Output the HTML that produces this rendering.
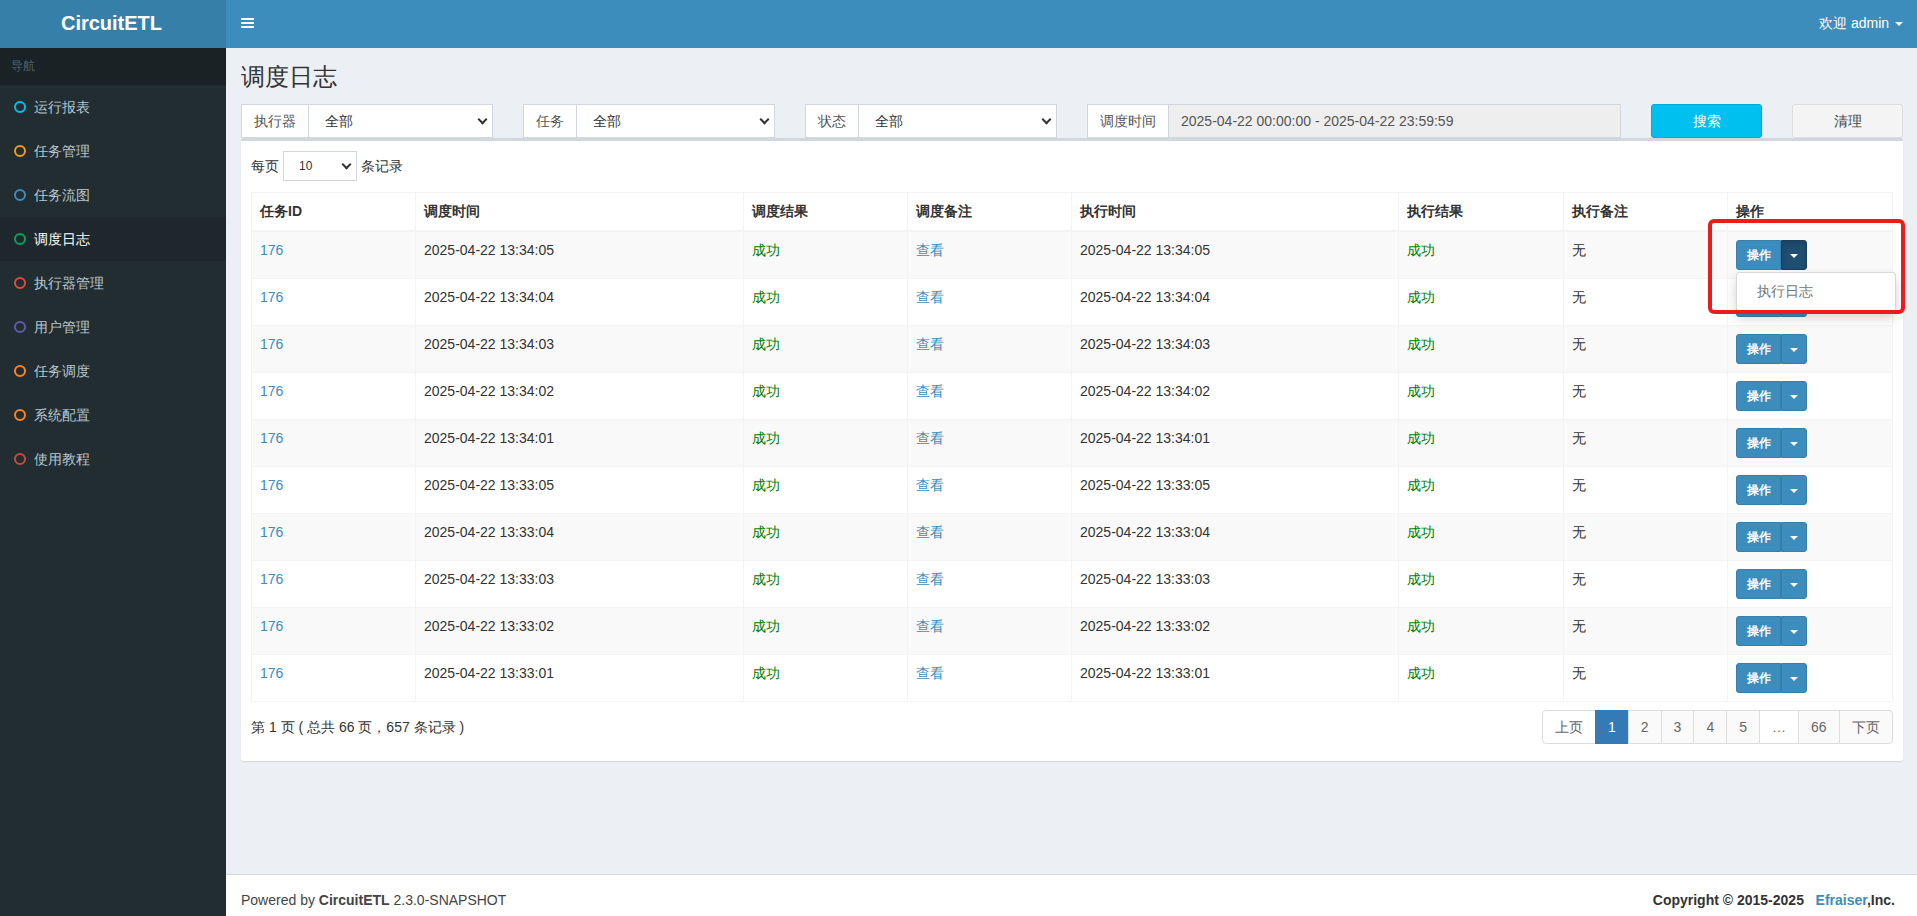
<!DOCTYPE html>
<html><head><meta charset="utf-8">
<style>
*{box-sizing:border-box}
html,body{margin:0;padding:0;width:1917px;height:916px;overflow:hidden;font-family:"Liberation Sans",sans-serif;font-size:14px;color:#333;background:#ecf0f5}
.logo{position:absolute;left:0;top:0;width:226px;height:48px;background:#367fa9;color:#fff;font-size:20px;font-weight:bold;text-align:center;line-height:46px;padding-right:3px}
.navbar{position:absolute;left:226px;top:0;right:0;height:48px;background:#3c8dbc;color:#fff}
.toggle{position:absolute;left:15px;top:18px;width:13px}
.toggle i{display:block;height:2px;background:#fff;margin-bottom:2px}
.user{position:absolute;right:14px;top:15px;font-size:14px;color:#fff}
.caret{display:inline-block;width:0;height:0;border-top:4px solid;border-left:4px solid transparent;border-right:4px solid transparent;vertical-align:middle;margin-left:2px}
.sidebar{position:absolute;left:0;top:48px;width:226px;bottom:0;background:#222d32}
.sidebar .hdr{height:37px;background:#1a2226;color:#4b646f;font-size:12px;padding:10px 0 0 11px}
.menu{position:relative}
.menu div{height:44px;position:relative;color:#b8c7ce;font-size:14px;line-height:44px;padding-left:34px}
.menu div.active{background:#1e282c;color:#fff}
.menu div b{position:absolute;left:14px;top:16px;width:12px;height:12px;border-radius:50%;border:2px solid}
.content{position:absolute;left:226px;top:48px;right:0;bottom:42px}
h1{position:absolute;left:15px;top:13px;margin:0;font-size:24px;font-weight:normal;color:#333}
.footer{position:absolute;left:226px;right:0;bottom:0;height:42px;background:#fff;border-top:1px solid #d2d6de;color:#444;padding:0 15px;line-height:50px}

.filters{position:absolute;left:15px;top:56px;width:1661px;height:34px}
.ig{position:absolute;top:0;height:34px;display:flex;background:#fff;border:1px solid #d2d6de}
.ig .lab{border-right:1px solid #d2d6de;color:#555;padding:0 12px;line-height:32px;white-space:nowrap}
.ig .sel{flex:1;position:relative;color:#333;padding-left:16px;line-height:32px}
.chev{position:absolute;right:6px;top:11px;width:7px;height:7px;border-right:2px solid #333;border-bottom:2px solid #333;transform:rotate(45deg)}
.ig.dt .sel{background:#eee;color:#555;padding-left:12px}
.btn{position:absolute;top:0;height:34px;border-radius:3px;text-align:center;line-height:32px;font-size:14px}
.box{position:absolute;left:15px;top:90px;width:1662px;height:623px;background:#fff;border-top:3px solid #d2d6de;border-radius:3px;box-shadow:0 1px 1px rgba(0,0,0,.1)}
.len{position:absolute;left:10px;top:10px;line-height:30px;color:#333}
.len .s{display:inline-block;vertical-align:top;position:relative;width:74px;height:30px;border:1px solid #d2d6de;margin:0 4px 0 4px;font-size:12px;padding-left:15px;line-height:28px}
.len .s .chev{top:9px;right:6px;width:7px;height:7px}
table{position:absolute;left:10px;top:51px;width:1641px;border-collapse:collapse;table-layout:fixed}
td,th{border:1px solid #f4f4f4;padding:8px;text-align:left;line-height:20px;vertical-align:top}
th{font-weight:bold;border-bottom-width:2px;height:38px;color:#333}
td{height:47px;white-space:nowrap}
tr.odd td{background:#f9f9f9}
a{color:#3c8dbc}
.ok{color:#008000}
.bg{display:block;margin-top:0;height:30px;position:relative;width:71px}
.b1,.b2{position:absolute;top:0;height:30px;background:#3c8dbc;border:1px solid #367fa9;color:#fff;font-size:12px;line-height:28px}
.b1{left:0;width:45px;border-radius:3px 0 0 3px;text-align:center;font-weight:bold}
.b2{left:45px;width:26px;border-radius:0 3px 3px 0}
.b2 .caret{position:absolute;left:8px;top:13px;border-top-width:4px;margin:0}
.b2.act{background:#1f4e71;border-color:#1a3f5e;box-shadow:inset 0 3px 5px rgba(0,0,0,.125)}
.info{position:absolute;left:10px;top:576px;line-height:20px}
.pag{position:absolute;left:1301px;top:569px;height:34px;display:flex}
.pag span{display:block;height:34px;border:1px solid #ddd;margin-left:-1px;padding:0 12px;line-height:32px;color:#666;background:#fafafa}
.footer .r{position:absolute;right:22px;top:0;font-weight:bold;color:#333}
.dd{position:absolute;left:1736px;top:272px;width:160px;height:40px;background:#fff;border:1px solid rgba(0,0,0,.15);border-radius:4px;box-shadow:0 6px 12px rgba(0,0,0,.175);color:#777;padding:8px 0 0 20px;line-height:20px;font-size:14px}
.red{position:absolute;left:1708px;top:219px;width:197px;height:95px;border:4px solid #ec1c1c;border-radius:6px}
</style></head><body>
<div class="logo">CircuitETL</div>
<div class="navbar">
  <div class="toggle"><i></i><i></i><i></i></div>
  <div class="user">欢迎 admin <span class="caret"></span></div>
</div>
<div class="sidebar">
  <div class="hdr">导航</div>
  <div class="menu">
    <div><b style="color:#00c0ef"></b>运行报表</div>
    <div><b style="color:#f39c12"></b>任务管理</div>
    <div><b style="color:#3c8dbc"></b>任务流图</div>
    <div class="active"><b style="color:#00a65a"></b>调度日志</div>
    <div><b style="color:#dd4b39"></b>执行器管理</div>
    <div><b style="color:#605ca8"></b>用户管理</div>
    <div><b style="color:#ff851b"></b>任务调度</div>
    <div><b style="color:#ff851b"></b>系统配置</div>
    <div><b style="color:#c64b3f"></b>使用教程</div>
  </div>
</div>
<div class="content">
  <h1>调度日志</h1>

  <div class="filters">
    <div class="ig" style="left:0;width:252px"><span class="lab">执行器</span><span class="sel">全部<i class="chev"></i></span></div>
    <div class="ig" style="left:282px;width:252px"><span class="lab">任务</span><span class="sel">全部<i class="chev"></i></span></div>
    <div class="ig" style="left:564px;width:252px"><span class="lab">状态</span><span class="sel">全部<i class="chev"></i></span></div>
    <div class="ig dt" style="left:846px;width:534px"><span class="lab">调度时间</span><span class="sel">2025-04-22 00:00:00 - 2025-04-22 23:59:59</span></div>
    <div class="btn" style="left:1410px;width:111px;background:#00c0ef;border:1px solid #00acd6;color:#fff">搜索</div>
    <div class="btn" style="left:1551px;width:111px;background:#f4f4f4;border:1px solid #ddd;color:#444">清理</div>
  </div>
  <div class="box">
    <div class="len">每页<span class="s">10<i class="chev"></i></span>条记录</div>
    <table>
      <colgroup><col style="width:164px"><col style="width:328px"><col style="width:164px"><col style="width:164px"><col style="width:327px"><col style="width:165px"><col style="width:164px"><col style="width:165px"></colgroup>
      <thead><tr><th>任务ID</th><th>调度时间</th><th>调度结果</th><th>调度备注</th><th>执行时间</th><th>执行结果</th><th>执行备注</th><th>操作</th></tr></thead>
      <tbody>
<tr class="odd"><td><a>176</a></td><td>2025-04-22 13:34:05</td><td><span class="ok">成功</span></td><td><a>查看</a></td><td>2025-04-22 13:34:05</td><td><span class="ok">成功</span></td><td>无</td><td><div class="bg"><span class="b1">操作</span><span class="b2 act"><i class="caret"></i></span></div></td></tr>
<tr><td><a>176</a></td><td>2025-04-22 13:34:04</td><td><span class="ok">成功</span></td><td><a>查看</a></td><td>2025-04-22 13:34:04</td><td><span class="ok">成功</span></td><td>无</td><td><div class="bg"><span class="b1">操作</span><span class="b2"><i class="caret"></i></span></div></td></tr>
<tr class="odd"><td><a>176</a></td><td>2025-04-22 13:34:03</td><td><span class="ok">成功</span></td><td><a>查看</a></td><td>2025-04-22 13:34:03</td><td><span class="ok">成功</span></td><td>无</td><td><div class="bg"><span class="b1">操作</span><span class="b2"><i class="caret"></i></span></div></td></tr>
<tr><td><a>176</a></td><td>2025-04-22 13:34:02</td><td><span class="ok">成功</span></td><td><a>查看</a></td><td>2025-04-22 13:34:02</td><td><span class="ok">成功</span></td><td>无</td><td><div class="bg"><span class="b1">操作</span><span class="b2"><i class="caret"></i></span></div></td></tr>
<tr class="odd"><td><a>176</a></td><td>2025-04-22 13:34:01</td><td><span class="ok">成功</span></td><td><a>查看</a></td><td>2025-04-22 13:34:01</td><td><span class="ok">成功</span></td><td>无</td><td><div class="bg"><span class="b1">操作</span><span class="b2"><i class="caret"></i></span></div></td></tr>
<tr><td><a>176</a></td><td>2025-04-22 13:33:05</td><td><span class="ok">成功</span></td><td><a>查看</a></td><td>2025-04-22 13:33:05</td><td><span class="ok">成功</span></td><td>无</td><td><div class="bg"><span class="b1">操作</span><span class="b2"><i class="caret"></i></span></div></td></tr>
<tr class="odd"><td><a>176</a></td><td>2025-04-22 13:33:04</td><td><span class="ok">成功</span></td><td><a>查看</a></td><td>2025-04-22 13:33:04</td><td><span class="ok">成功</span></td><td>无</td><td><div class="bg"><span class="b1">操作</span><span class="b2"><i class="caret"></i></span></div></td></tr>
<tr><td><a>176</a></td><td>2025-04-22 13:33:03</td><td><span class="ok">成功</span></td><td><a>查看</a></td><td>2025-04-22 13:33:03</td><td><span class="ok">成功</span></td><td>无</td><td><div class="bg"><span class="b1">操作</span><span class="b2"><i class="caret"></i></span></div></td></tr>
<tr class="odd"><td><a>176</a></td><td>2025-04-22 13:33:02</td><td><span class="ok">成功</span></td><td><a>查看</a></td><td>2025-04-22 13:33:02</td><td><span class="ok">成功</span></td><td>无</td><td><div class="bg"><span class="b1">操作</span><span class="b2"><i class="caret"></i></span></div></td></tr>
<tr><td><a>176</a></td><td>2025-04-22 13:33:01</td><td><span class="ok">成功</span></td><td><a>查看</a></td><td>2025-04-22 13:33:01</td><td><span class="ok">成功</span></td><td>无</td><td><div class="bg"><span class="b1">操作</span><span class="b2"><i class="caret"></i></span></div></td></tr>
      </tbody>
    </table>
    <div class="info">第 1 页 ( 总共 66 页，657 条记录 )</div>
    <div class="pag"><span style="background:#fff;border-radius:4px 0 0 4px;margin-left:0">上页</span><span style="background:#337ab7;border-color:#337ab7;color:#fff">1</span><span>2</span><span>3</span><span>4</span><span>5</span><span style="background:#fff;color:#777">…</span><span>66</span><span style="border-radius:0 4px 4px 0">下页</span></div>
  </div>
</div>
<div class="footer">Powered by <b>CircuitETL</b> 2.3.0-SNAPSHOT<span class="r">Copyright © 2015-2025 &nbsp;&nbsp;<a style="color:#3c8dbc">Efraiser</a>,Inc.</span></div>
<div class="dd">执行日志</div>
<div class="red"></div>
</body></html>
